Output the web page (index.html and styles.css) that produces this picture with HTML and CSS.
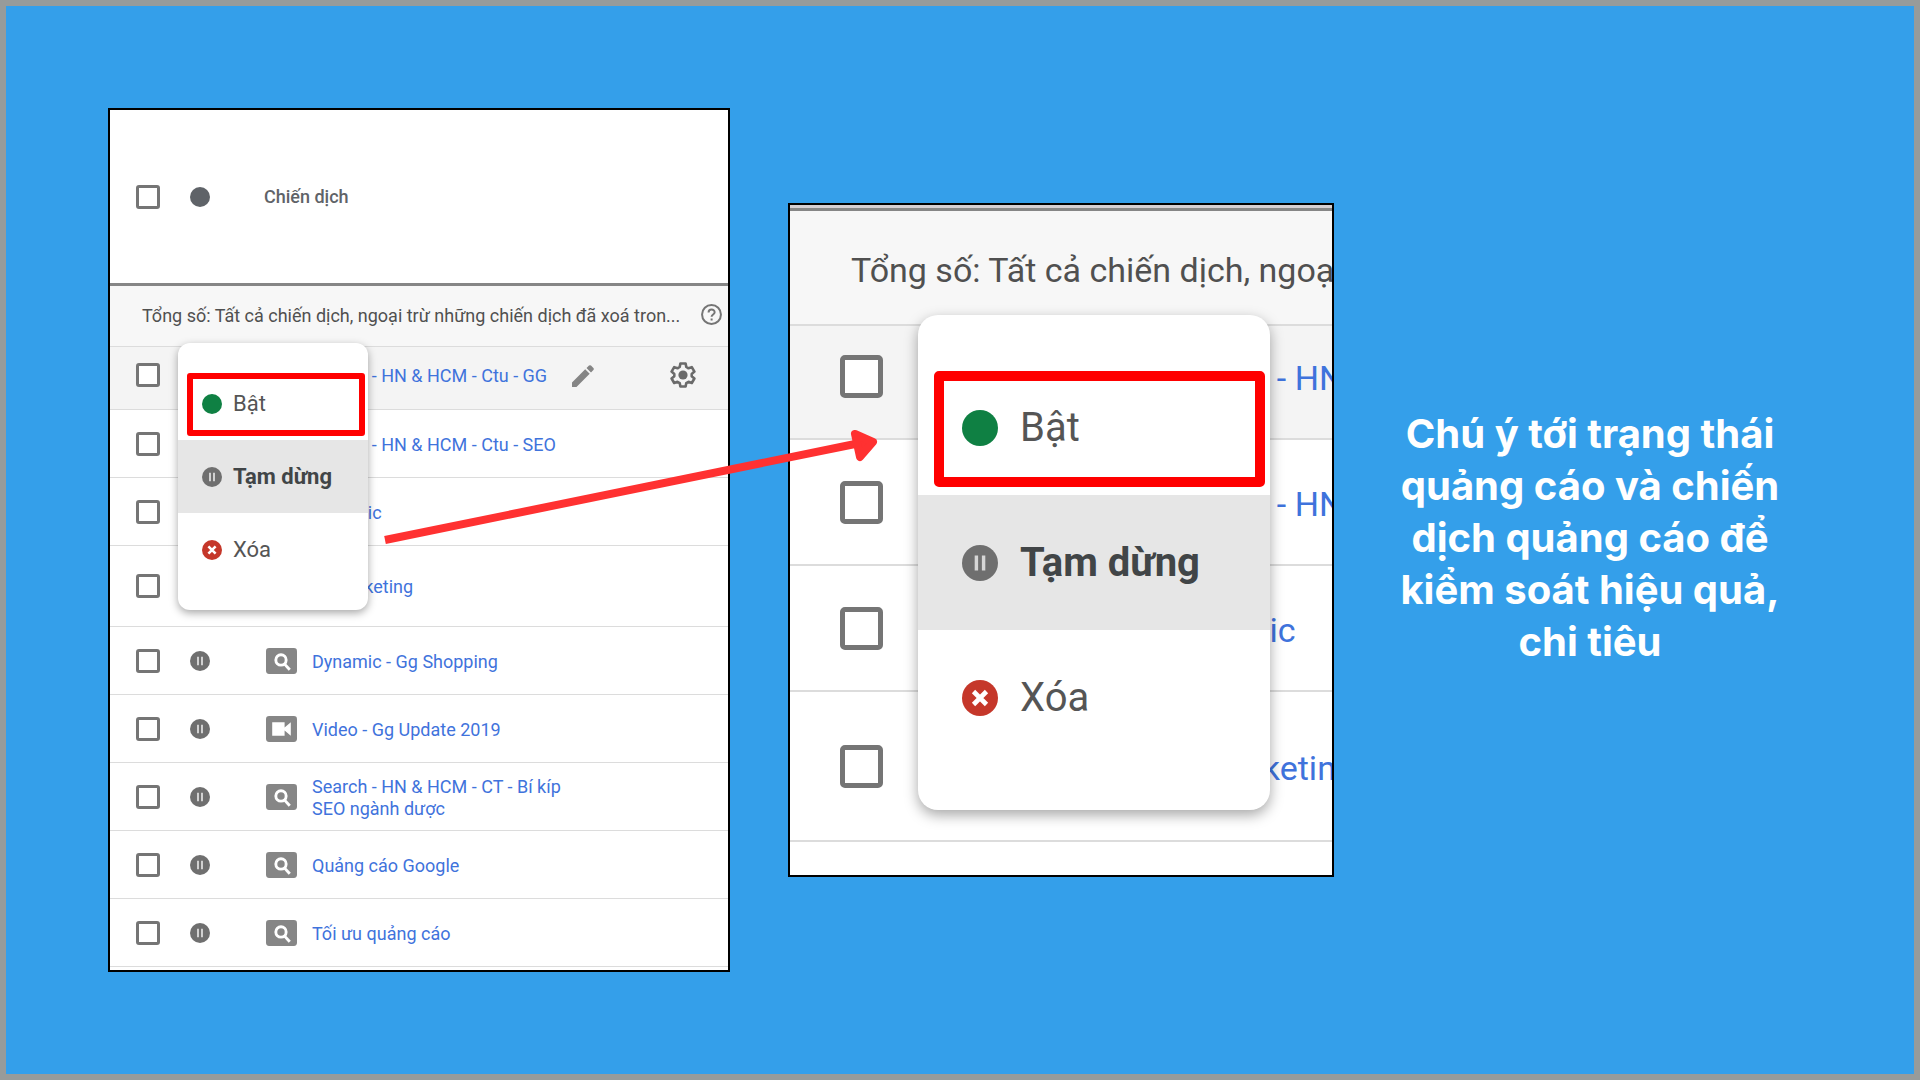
FILE: index.html
```html
<!DOCTYPE html>
<html lang="vi">
<head>
  <meta charset="UTF-8" />
  <meta name="viewport" content="width=device-width, initial-scale=1" />
  <title>Trạng thái chiến dịch quảng cáo</title>
  <link rel="stylesheet" href="styles.css">
</head>
<body>

<svg class="sprite" aria-hidden="true">
  <symbol id="i-pause" viewBox="0 0 20 20">
    <circle cx="10" cy="10" r="10" fill="#6f6f6f"/>
    <path d="M8 5.8v8.4M12 5.8v8.4" stroke="#d6d6d6" stroke-width="1.9"/>
  </symbol>
  <symbol id="i-on" viewBox="0 0 20 20">
    <circle cx="10" cy="10" r="10" fill="#0f8043"/>
  </symbol>
  <symbol id="i-remove" viewBox="0 0 20 20">
    <circle cx="10" cy="10" r="10" fill="#c5372a"/>
    <path d="M6.4 6.4l7.2 7.2M13.6 6.4l-7.2 7.2" stroke="#fff" stroke-width="2.6"/>
  </symbol>
  <symbol id="i-search" viewBox="0 0 30 25">
    <rect width="30" height="25" rx="3" fill="#868686"/>
    <circle cx="14.5" cy="11.5" r="5" fill="none" stroke="#fff" stroke-width="2.8"/>
    <path d="M18 15.5l5 5.5" stroke="#fff" stroke-width="2.8"/>
  </symbol>
  <symbol id="i-video" viewBox="0 0 30 25">
    <rect width="30" height="25" rx="3" fill="#868686"/>
    <path d="M6 6h12v5l6-5v13l-6-5v5H6z" fill="#fff"/>
  </symbol>
</svg>

<main class="slide">
  <section class="panel panel-list">
    <table class="campaigns">
      <colgroup>
        <col class="col-check"><col class="col-status"><col class="col-type"><col>
      </colgroup>
      <thead>
        <tr>
          <th><input type="checkbox" aria-label="Chọn tất cả"></th>
          <th><span class="dot"></span></th>
          <th colspan="2" scope="col">Chiến dịch</th>
        </tr>
      </thead>
      <tbody>
        <tr class="total">
          <td colspan="4">
            <div class="line">
              <span>Tổng số: Tất cả chiến dịch, ngoại trừ những chiến dịch đã xoá tron...</span>
              <button class="icon-btn help" type="button" aria-label="Trợ giúp">
                <svg viewBox="0 0 20 20" fill="none" stroke="#757575" stroke-width="1.9"><circle cx="10" cy="10" r="9"/><path d="M7.2 8.2c0-4 5.8-3.7 5.8-.4 0 2.1-2.900 2.200-2.900 4.300M10.100 13.700v2"/></svg>
              </button>
            </div>
          </td>
        </tr>
        <tr class="active">
          <td><input type="checkbox" aria-label="Search - HN &amp; HCM - Ctu - GG"></td>
          <td></td>
          <td></td>
          <td>
            <div class="line">
              <a href="#">Search - HN &amp; HCM - Ctu - GG</a>
              <button class="icon-btn edit" type="button" aria-label="Sửa">
                <svg viewBox="0 0 22 22" fill="#858585"><path d="M0 17.500L13.200 4.300l4.500 4.500L4.500 22H0zM14.500 3L17 .6q1-.9 2 0L21.400 3q.9 1 0 2L19 7.500z"/></svg>
              </button>
              <button class="icon-btn gear" type="button" aria-label="Cài đặt">
                <svg viewBox="0 0 26 26" fill="none" stroke="#6a6a6a" stroke-width="2.600" stroke-linejoin="round"><path d="M10.400 1.500h5.200l.7 3.500 2.200 1.300 3.300-1.200 2.600 4.500-2.700 2.300v2.300l2.700 2.300-2.600 4.500-3.300-1.200-2.200 1.300-.7 3.400h-5.200l-.7-3.400-2.200-1.300-3.300 1.200-2.600-4.500 2.700-2.300v-2.300L1.600 9.600l2.600-4.500 3.300 1.200L9.700 5z"/><circle cx="13" cy="13" r="4.600" fill="#6a6a6a" stroke="none"/></svg>
              </button>
            </div>
          </td>
        </tr>
        <tr>
          <td><input type="checkbox" aria-label="Search - HN &amp; HCM - Ctu - SEO"></td>
          <td></td>
          <td></td>
          <td><a href="#">Search - HN &amp; HCM - Ctu - SEO</a></td>
        </tr>
        <tr>
          <td><input type="checkbox" aria-label="Dynamic"></td>
          <td></td>
          <td></td>
          <td><a href="#">Dynamic</a></td>
        </tr>
        <tr class="tall">
          <td><input type="checkbox" aria-label="Remarketing"></td>
          <td></td>
          <td></td>
          <td><a href="#">Remarketing</a></td>
        </tr>
        <tr>
          <td><input type="checkbox" aria-label="Dynamic - Gg Shopping"></td>
          <td><svg class="status"><use href="#i-pause"/></svg></td>
          <td><svg class="type"><use href="#i-search"/></svg></td>
          <td><a href="#">Dynamic - Gg Shopping</a></td>
        </tr>
        <tr>
          <td><input type="checkbox" aria-label="Video - Gg Update 2019"></td>
          <td><svg class="status"><use href="#i-pause"/></svg></td>
          <td><svg class="type"><use href="#i-video"/></svg></td>
          <td><a href="#">Video - Gg Update 2019</a></td>
        </tr>
        <tr>
          <td><input type="checkbox" aria-label="Search - HN &amp; HCM - CT - Bí kíp SEO ngành dược"></td>
          <td><svg class="status"><use href="#i-pause"/></svg></td>
          <td><svg class="type"><use href="#i-search"/></svg></td>
          <td><a href="#">Search - HN &amp; HCM - CT - Bí kíp<br>SEO ngành dược</a></td>
        </tr>
        <tr>
          <td><input type="checkbox" aria-label="Quảng cáo Google"></td>
          <td><svg class="status"><use href="#i-pause"/></svg></td>
          <td><svg class="type"><use href="#i-search"/></svg></td>
          <td><a href="#">Quảng cáo Google</a></td>
        </tr>
        <tr>
          <td><input type="checkbox" aria-label="Tối ưu quảng cáo"></td>
          <td><svg class="status"><use href="#i-pause"/></svg></td>
          <td><svg class="type"><use href="#i-search"/></svg></td>
          <td><a href="#">Tối ưu quảng cáo</a></td>
        </tr>
      </tbody>
    </table>

    <div class="menu">
      <button class="marked" type="button"><svg><use href="#i-on"/></svg>Bật</button>
      <button class="selected" type="button"><svg><use href="#i-pause"/></svg>Tạm dừng</button>
      <button type="button"><svg><use href="#i-remove"/></svg>Xóa</button>
    </div>

    <svg class="arrow" viewBox="0 0 500 120" aria-hidden="true">
      <path d="M5 110L480 13" stroke="#ff3131" stroke-width="8"/>
      <path d="M475 4L493 12L480 27z" fill="#ff3131" stroke="#ff3131" stroke-width="8" stroke-linejoin="round"/>
    </svg>
  </section>

  <section class="panel panel-zoom">
    <div class="crop">
      <table class="campaigns">
        <colgroup>
          <col class="col-check"><col>
        </colgroup>
        <tbody>
          <tr class="total">
            <td colspan="2">Tổng số: Tất cả chiến dịch, ngoạ</td>
          </tr>
          <tr class="active">
            <td><input type="checkbox" aria-label="Search - HN"></td>
            <td><a href="#">Search - HN</a></td>
          </tr>
          <tr>
            <td><input type="checkbox" aria-label="Search - HN"></td>
            <td><a href="#">Search - HN</a></td>
          </tr>
          <tr>
            <td><input type="checkbox" aria-label="Dynamic"></td>
            <td><a href="#">Dynamic</a></td>
          </tr>
          <tr class="tall">
            <td><input type="checkbox" aria-label="Remarketing"></td>
            <td><a href="#">Remarketin</a></td>
          </tr>
        </tbody>
      </table>
    </div>

    <div class="menu">
      <button class="marked" type="button"><svg><use href="#i-on"/></svg>Bật</button>
      <button class="selected" type="button"><svg><use href="#i-pause"/></svg>Tạm dừng</button>
      <button type="button"><svg><use href="#i-remove"/></svg>Xóa</button>
    </div>
  </section>

  <p class="caption">Chú ý tới trạng thái quảng cáo và chiến dịch quảng cáo để kiểm soát hiệu quả, chi tiêu</p>
</main>

</body>
</html>
```
FILE: styles.css
```css
* {
  box-sizing: border-box;
}
body {
  margin: 0;
  font-family: Roboto, "Liberation Sans", sans-serif;
  color: #505050;
}
.sprite {
  display: none;
}
.slide {
  display: grid;
  grid-template-columns: minmax(0, 622fr) minmax(0, 546fr) minmax(0, 396fr);
  gap: 58px;
  align-items: center;
  min-height: 100vh;
  padding: 0 126px 0 102px;
  border: 6px solid #979b9a;
  background: #349fea;
}

/* panels */
.panel {
  position: relative;
  background: #fff;
  border: 2px solid #000;
}
.panel-list {
  --box: 24px;
  --box-line: 3px;
  padding-bottom: 3px;
  font-size: 18px;
  line-height: 22px;
  z-index: 1;
}
.panel-zoom {
  --box: 43px;
  --box-line: 5px;
  padding-bottom: 33px;
  font-size: 34px;
  line-height: 40px;
}
.crop {
  overflow: hidden;
  border-top: 3px solid #d5cfd2;
}

/* campaign table */
.campaigns {
  width: 100%;
  table-layout: fixed;
  border-spacing: 0;
  white-space: nowrap;
}
.campaigns th,
.campaigns td {
  height: 68px;
  padding: 0;
  text-align: left;
  vertical-align: middle;
  border-bottom: 1px solid #dcdcdc;
}
.campaigns th {
  height: 176px;
  font-weight: 500;
  color: #5f6368;
  border-bottom: 3px solid #868686;
}
.campaigns td:last-child {
  padding-top: 2px;
}
.campaigns .total td {
  height: 61px;
  padding-top: 0;
  padding-left: 32px;
  background: #f7f7f7;
}
.campaigns .active td {
  height: 63px;
  padding-bottom: 6px;
  background: #f4f4f4;
}
.campaigns .tall td {
  height: 81px;
}
.campaigns input {
  display: block;
  appearance: none;
  width: var(--box);
  height: var(--box);
  margin: 0 0 0 26px;
  border: var(--box-line) solid #757575;
  border-radius: 3px;
  background: #fff;
}
.campaigns svg {
  display: block;
}
.campaigns a {
  color: #3f73dc;
  text-decoration: none;
}
.col-check {
  width: 66px;
}
.col-status {
  width: 88px;
}
.col-type {
  width: 48px;
}
.dot {
  display: block;
  width: 20px;
  height: 20px;
  margin-left: 14px;
  border-radius: 50%;
  background: #5f6368;
}
.status {
  width: 20px;
  height: 20px;
  margin-left: 14px;
}
.type {
  width: 31px;
  height: 26px;
  margin-left: 2px;
}
.line {
  display: flex;
  align-items: center;
}
.icon-btn {
  padding: 0;
  border: 0;
  background: none;
}
.help {
  width: 21px;
  margin: 0 6px 4px auto;
}
.edit {
  width: 22px;
  margin-left: 25px;
}
.gear {
  width: 26px;
  margin: 0 32px 2px auto;
}

/* enlarged table */
.panel-zoom td {
  height: 126px;
  border-bottom-width: 2px;
}
.panel-zoom .total td {
  height: 118px;
  padding-left: 61px;
  border-top: 3px solid #868686;
}
.panel-zoom .active td {
  height: 114px;
  padding-bottom: 12px;
}
.panel-zoom td:last-child {
  padding-top: 4px;
}
.panel-zoom .tall td {
  height: 150px;
}
.panel-zoom .campaigns input {
  margin-left: 50px;
  border-radius: 5px;
}
.panel-zoom .col-check {
  width: 374px;
}

/* status menu */
.menu {
  position: absolute;
  top: 233px;
  left: 68px;
  width: 190px;
  padding: 24px 0;
  border-radius: 12px;
  background: #fff;
  box-shadow: 0 3px 8px rgba(0, 0, 0, 0.35);
}
.menu button {
  position: relative;
  display: flex;
  align-items: center;
  gap: 11px;
  width: 100%;
  height: 73px;
  padding: 0 0 0 24px;
  border: 0;
  background: none;
  font: inherit;
  font-size: 22px;
  color: #555;
}
.menu svg {
  width: 20px;
  height: 20px;
}
.menu .selected {
  background: #e6e6e6;
  font-weight: 700;
  color: #414547;
}
.menu .marked::after {
  content: "";
  position: absolute;
  inset: 6px 3px 4px 9px;
  border: 6px solid #f00;
  border-radius: 3px;
}
.panel-zoom .menu {
  top: 110px;
  left: 128px;
  width: 352px;
  padding: 45px 0;
  border-radius: 20px;
  box-shadow: 0 5px 14px rgba(0, 0, 0, 0.35);
}
.panel-zoom .menu button {
  height: 135px;
  gap: 22px;
  padding-left: 44px;
  font-size: 40px;
}
.panel-zoom .menu svg {
  width: 36px;
  height: 36px;
}
.panel-zoom .menu .marked::after {
  inset: 11px 5px 8px 16px;
  border-width: 10px;
  border-radius: 5px;
}

.arrow {
  position: absolute;
  top: 320px;
  left: 270px;
  width: 500px;
  height: 120px;
  pointer-events: none;
}

.caption {
  margin: 0;
  padding-bottom: 4px;
  font-family: Inter, "Open Sans", sans-serif;
  font-size: 40px;
  font-weight: 700;
  line-height: 52px;
  text-align: center;
  color: #fff;
}
```
